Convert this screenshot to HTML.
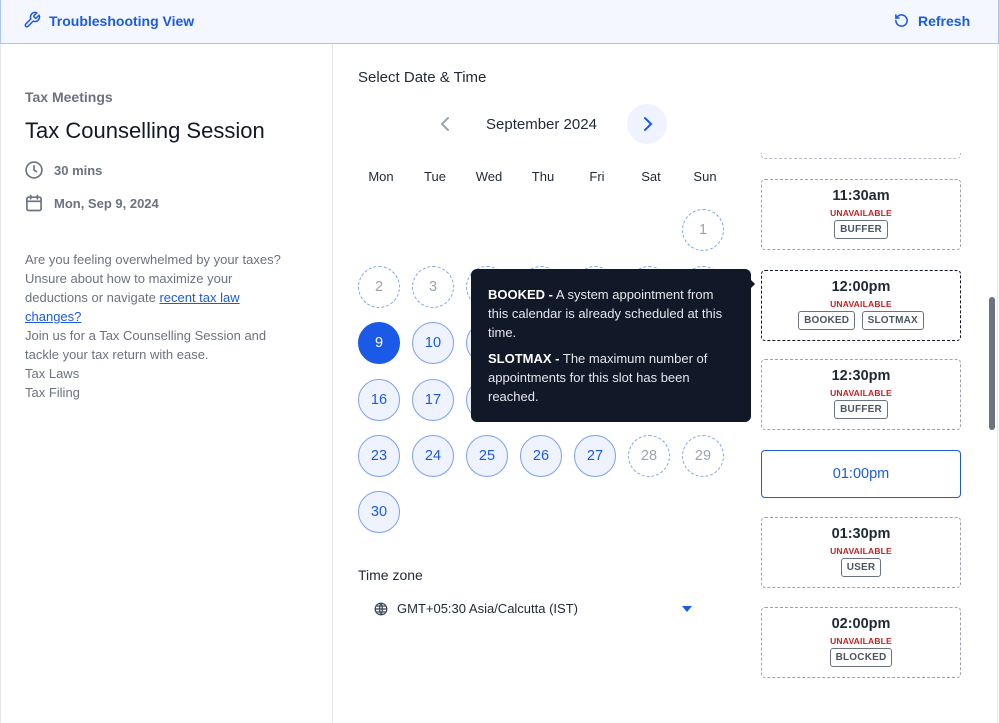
<!DOCTYPE html>
<html><head><meta charset="utf-8"><style>
*{box-sizing:border-box;margin:0;padding:0}
body{width:999px;height:723px;overflow:hidden;background:#fff;font-family:"Liberation Sans",sans-serif;position:relative;color:#111827}
.a{position:absolute;white-space:nowrap}
.hdr{left:0;top:0;width:999px;height:44px;background:#f4f7ff;border:1px solid #a9c4f5;border-top:none}
.blue{color:#1a5ae6;font-weight:bold;font-size:14px}
.d{position:absolute;width:42px;height:42px;border-radius:50%;display:flex;align-items:center;justify-content:center;font-size:14.5px}
.u{border:1px dashed #7aa2f0;color:#9ca3af}
.v{border:1px solid #7aa2f0;background:#eef3ff;color:#1a5ae6}
.s{background:#1a5ae6;color:#fff;border:1px solid #1a5ae6}
.slot{position:absolute;left:761px;width:200px;border:1px dashed #9ca3af;border-radius:4px;text-align:center}
.slot .t{font-size:14.5px;font-weight:bold;color:#1f2937;margin-top:8px}
.slot .un{font-size:8.5px;font-weight:bold;color:#c81e1e;margin-top:4px;letter-spacing:.2px}
.tag{display:inline-block;border:1px solid #6b7280;border-radius:3px;font-size:10px;font-weight:bold;color:#4b5563;padding:3px 5px;margin:2px 1px 0;letter-spacing:.2px}
.wd{position:absolute;top:169px;width:54px;text-align:center;font-size:13px;color:#1f2937}
</style></head><body>
<div class="a hdr"></div>
<svg class="a" style="left:23px;top:11px" width="18" height="18" viewBox="0 0 24 24" fill="none" stroke="#1a5ae6" stroke-width="2" stroke-linecap="round" stroke-linejoin="round"><path d="M14.7 6.3a1 1 0 0 0 0 1.4l1.6 1.6a1 1 0 0 0 1.4 0l3.77-3.770a6 6 0 0 1-7.94 7.94l-6.91 6.91a2.12 2.12 0 0 1-3-3l6.91-6.91a6 6 0 0 1 7.94-7.94l-3.76 3.76z"/></svg>
<div class="a blue" style="left:49px;top:13px">Troubleshooting View</div>
<svg class="a" style="left:894px;top:13px" width="15" height="15" viewBox="0 0 24 24" fill="none" stroke="#1a5ae6" stroke-width="2.5" stroke-linecap="round" stroke-linejoin="round"><path d="M3 12a9 9 0 1 0 3-6.7L3 8"/><path d="M3 3v5h5"/></svg>
<div class="a blue" style="left:918px;top:13px">Refresh</div>
<div class="a" style="left:0;top:44px;width:1px;height:679px;background:#e5e7eb"></div>
<div class="a" style="left:332px;top:44px;width:1px;height:679px;background:#e5e7eb"></div>
<div class="a" style="left:997px;top:44px;width:1px;height:679px;background:#e5e7eb"></div>
<div class="a" style="left:25px;top:89px;font-size:14px;font-weight:bold;color:#6b7280">Tax Meetings</div>
<div class="a" style="left:25px;top:118px;font-size:22px;color:#111827">Tax Counselling Session</div>
<svg class="a" style="left:24px;top:160px" width="20" height="20" viewBox="0 0 24 24" fill="none" stroke="#6b7280" stroke-width="2" stroke-linecap="round"><circle cx="12" cy="12" r="9.5"/><path d="M12 7v5l3 2"/></svg>
<div class="a" style="left:54px;top:163px;font-size:13px;font-weight:bold;color:#6b7280">30 mins</div>
<svg class="a" style="left:24px;top:193px" width="20" height="20" viewBox="0 0 24 24" fill="none" stroke="#6b7280" stroke-width="2" stroke-linecap="round"><rect x="3.5" y="5" width="17" height="16" rx="2"/><path d="M8 3v4M16 3v4M3.5 10h17"/></svg>
<div class="a" style="left:54px;top:196px;font-size:13px;font-weight:bold;color:#6b7280">Mon, Sep 9, 2024</div>
<div class="a" style="left:25px;top:250px;font-size:13px;line-height:19px;color:#6b7280">Are you feeling overwhelmed by your taxes?<br>Unsure about how to maximize your<br>deductions or navigate <span style="color:#1a5ae6;text-decoration:underline">recent tax law</span><br><span style="color:#1a5ae6;text-decoration:underline">changes?</span><br>Join us for a Tax Counselling Session and<br>tackle your tax return with ease.<br>Tax Laws<br>Tax Filing</div>
<div class="a" style="left:358px;top:69px;font-size:15px;color:#1f2937">Select Date &amp; Time</div>
<svg class="a" style="left:439px;top:116px" width="14" height="16" viewBox="0 0 14 16" fill="none" stroke="#9ca3af" stroke-width="2" stroke-linecap="round"><path d="M9 2L3 8l6 6"/></svg>
<div class="a" style="left:486px;top:116px;font-size:15px;color:#1f2937">September 2024</div>
<div class="a" style="left:627px;top:104px;width:40px;height:40px;border-radius:50%;background:#eef3ff"></div>
<svg class="a" style="left:640px;top:116px" width="14" height="16" viewBox="0 0 14 16" fill="none" stroke="#1a5ae6" stroke-width="2" stroke-linecap="round"><path d="M5 2l6 6-6 6"/></svg>
<div class="wd" style="left:354px">Mon</div><div class="wd" style="left:408px">Tue</div><div class="wd" style="left:462px">Wed</div><div class="wd" style="left:516px">Thu</div><div class="wd" style="left:570px">Fri</div><div class="wd" style="left:624px">Sat</div><div class="wd" style="left:678px">Sun</div>
<div class="d u" style="left:682px;top:209px">1</div>
<div class="d u" style="left:358px;top:266px">2</div><div class="d u" style="left:412px;top:266px">3</div><div class="d u" style="left:466px;top:266px">4</div><div class="d u" style="left:520px;top:266px">5</div><div class="d u" style="left:574px;top:266px">6</div><div class="d u" style="left:628px;top:266px">7</div><div class="d u" style="left:682px;top:266px">8</div>
<div class="d s" style="left:358px;top:322px">9</div><div class="d v" style="left:412px;top:322px">10</div><div class="d v" style="left:466px;top:322px">11</div><div class="d v" style="left:520px;top:322px">12</div><div class="d v" style="left:574px;top:322px">13</div><div class="d v" style="left:628px;top:322px">14</div><div class="d v" style="left:682px;top:322px">15</div>
<div class="d v" style="left:358px;top:379px">16</div><div class="d v" style="left:412px;top:379px">17</div><div class="d v" style="left:466px;top:379px">18</div><div class="d v" style="left:520px;top:379px">19</div><div class="d v" style="left:574px;top:379px">20</div><div class="d v" style="left:628px;top:379px">21</div><div class="d v" style="left:682px;top:379px">22</div>
<div class="d v" style="left:358px;top:435px">23</div><div class="d v" style="left:412px;top:435px">24</div><div class="d v" style="left:466px;top:435px">25</div><div class="d v" style="left:520px;top:435px">26</div><div class="d v" style="left:574px;top:435px">27</div><div class="d u" style="left:628px;top:435px">28</div><div class="d u" style="left:682px;top:435px">29</div>
<div class="d v" style="left:358px;top:491px">30</div>
<div class="a" style="left:471px;top:269px;width:280px;height:153px;background:#111827;border-radius:6px;padding:16px 17px;color:#e5e7eb;font-size:13px;line-height:19px">
<div><b style="color:#fff">BOOKED -</b> A system appointment from<br>this calendar is already scheduled at this<br>time.</div>
<div style="margin-top:7px"><b style="color:#fff">SLOTMAX -</b> The maximum number of<br>appointments for this slot has been<br>reached.</div>
</div>
<div class="a" style="left:749px;top:278px;width:0;height:0;border-top:6px solid transparent;border-bottom:6px solid transparent;border-left:6px solid #111827"></div>
<div class="a" style="left:358px;top:567px;font-size:14px;color:#1f2937">Time zone</div>
<svg class="a" style="left:374px;top:602px" width="14" height="14" viewBox="0 0 24 24" fill="none" stroke="#374151" stroke-width="2"><circle cx="12" cy="12" r="10"/><path d="M2 12h20M12 2c3 3 3 17 0 20M12 2c-3 3-3 17 0 20M4 7h16M4 17h16"/></svg>
<div class="a" style="left:397px;top:601px;font-size:13px;color:#1f2937">GMT+05:30 Asia/Calcutta (IST)</div>
<div class="a" style="left:682px;top:606px;border-left:5px solid transparent;border-right:5px solid transparent;border-top:6px solid #1a5ae6"></div>
<div class="a" style="left:761px;top:153px;width:200px;height:6px;border:1px dashed #b6bcc6;border-top:none;border-radius:0 0 4px 4px"></div>
<div class="slot" style="top:179px;height:71px"><div class="t">11:30am</div><div class="un">UNAVAILABLE</div><span class="tag">BUFFER</span></div>
<div class="slot" style="top:270px;height:71px;border-color:#111827"><div class="t">12:00pm</div><div class="un">UNAVAILABLE</div><span class="tag">BOOKED</span> <span class="tag">SLOTMAX</span></div>
<div class="slot" style="top:359px;height:71px"><div class="t">12:30pm</div><div class="un">UNAVAILABLE</div><span class="tag">BUFFER</span></div>
<div class="slot" style="top:450px;height:48px;border:1px solid #1a5ae6"><div class="t" style="margin-top:15px;color:#1a5ae6;font-weight:normal">01:00pm</div></div>
<div class="slot" style="top:517px;height:71px"><div class="t">01:30pm</div><div class="un">UNAVAILABLE</div><span class="tag">USER</span></div>
<div class="slot" style="top:607px;height:71px"><div class="t">02:00pm</div><div class="un">UNAVAILABLE</div><span class="tag">BLOCKED</span></div>
<div class="a" style="left:989px;top:297px;width:6px;height:133px;background:#6b7280;border-radius:3px"></div>
</body></html>
